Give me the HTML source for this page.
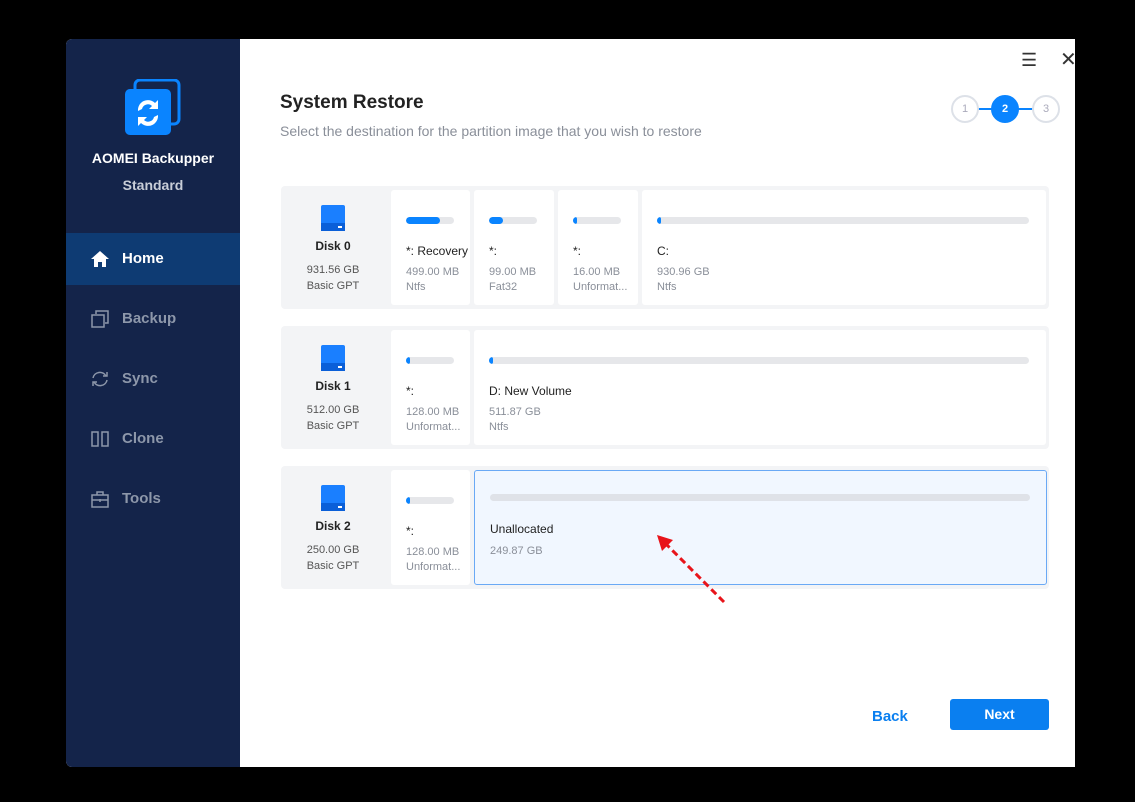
<!DOCTYPE html>
<html><head><style>
*{margin:0;padding:0;box-sizing:border-box}
body{width:1135px;height:802px;background:#000;position:relative;font-family:"Liberation Sans",sans-serif;overflow:hidden}
.win{position:absolute;left:66px;top:39px;width:1009px;height:728px;background:#fff;border-radius:6px 0 0 6px;overflow:hidden}
.side{position:absolute;left:0;top:0;width:174px;height:728px;background:#14244a}
.brand{position:absolute;top:111px;width:174px;text-align:center;color:#fff;font-weight:bold;font-size:14px}
.std{position:absolute;top:138px;width:174px;text-align:center;color:#c9ced8;font-weight:bold;font-size:14px}
.nav{position:absolute;left:0;width:174px;height:52px;color:#8d97aa;font-size:15px;font-weight:bold;line-height:52px;padding-left:56px}
.nav.act{background:#0e3b73;color:#fff}
.nav svg{position:absolute;left:24px;top:16px}
.title{position:absolute;left:214px;top:53px;font-size:19px;font-weight:bold;color:#222}
.sub{position:absolute;left:214px;top:84px;font-size:14px;color:#8a8f99}
.row{position:absolute;left:215px;width:768px;height:123px;background:#f3f4f6;border-radius:4px}
.disk{position:absolute;left:0;top:0;width:104px;height:123px;text-align:center}
.disk .n{position:absolute;top:53px;width:104px;font-size:12px;color:#222;font-weight:bold}
.disk .s{position:absolute;top:76px;width:104px;font-size:11px;color:#555;line-height:16px}
.card{position:absolute;top:4px;height:115px;background:#fff;border-radius:3px;padding-left:15px}
.bar{position:absolute;left:15px;top:27px;height:7px;border-radius:4px;background:#e6e7ea;overflow:hidden}
.bar i{display:block;height:7px;background:#0a84ff;border-radius:4px}
.lb{position:absolute;left:15px;top:54px;font-size:12px;color:#222}
.sz{position:absolute;left:15px;top:75px;font-size:11px;color:#8a8f99;line-height:15px;white-space:nowrap}
.step{position:absolute;top:56px;width:28px;height:28px;border-radius:50%;border:2px solid #dde1e8;background:#fff;color:#aab;font-size:11px;text-align:center;line-height:24px}
</style></head><body>
<div class="win">
<div class="side">
<svg style="position:absolute;left:58px;top:40px" width="58" height="56"><rect x="11" y="1" width="44" height="44" rx="5" fill="none" stroke="#0a84ff" stroke-width="3"/><rect x="1" y="10" width="46" height="46" rx="5" fill="#0a84ff"/><path d="M14 32a10 10 0 0 1 17-8l3-3v9h-9l3-3a6 6 0 0 0-10 3z M34 36a10 10 0 0 1-17 8l-3 3v-9h9l-3 3a6 6 0 0 0 10-3z" fill="#fff"/></svg>
<div class="brand">AOMEI Backupper</div>
<div class="std">Standard</div>
<div class="nav act" style="top:194px"><svg width="20" height="20"><path d="M1 10L10 2l9 8h-3v8h-4v-5H8v5H4v-8z" fill="#fff"/></svg>Home</div>
<div class="nav" style="top:254px"><svg width="20" height="20"><rect x="2" y="6" width="12" height="12" fill="none" stroke="#8d97aa" stroke-width="1.5"/><path d="M6 5V2h12v12h-3" fill="none" stroke="#8d97aa" stroke-width="1.5"/></svg>Backup</div>
<div class="nav" style="top:314px"><svg width="20" height="20"><path d="M3 9a7 7 0 0 1 13-2M17 11a7 7 0 0 1-13 2" fill="none" stroke="#8d97aa" stroke-width="1.5"/><path d="M13 7h4V3M7 13H3v4" fill="none" stroke="#8d97aa" stroke-width="1.5"/></svg>Sync</div>
<div class="nav" style="top:374px"><svg width="20" height="20"><rect x="2" y="3" width="6" height="14" fill="none" stroke="#8d97aa" stroke-width="1.5"/><rect x="12" y="3" width="6" height="14" fill="none" stroke="#8d97aa" stroke-width="1.5"/></svg>Clone</div>
<div class="nav" style="top:434px"><svg width="20" height="20"><rect x="2" y="6" width="16" height="12" fill="none" stroke="#8d97aa" stroke-width="1.5"/><path d="M7 6V3h6v3M2 11h16M10 10v3" fill="none" stroke="#8d97aa" stroke-width="1.5"/></svg>Tools</div>
</div>
<div style="position:absolute;left:955px;top:11px;font-size:18px;color:#333">☰</div>
<div style="position:absolute;left:994px;top:8px;font-size:20px;color:#333">✕</div>
<div style="position:absolute;left:910px;top:69px;width:60px;height:2px;background:#0a84ff"></div>
<div class="step" style="left:885px">1</div>
<div class="step" style="left:925px;background:#0a84ff;border-color:#0a84ff;color:#fff;font-weight:bold">2</div>
<div class="step" style="left:966px">3</div>
<div class="title">System Restore</div>
<div class="sub">Select the destination for the partition image that you wish to restore</div>

<div class="row" style="top:147px">
<div class="disk"><svg style="position:absolute;left:38px;top:18px" width="28" height="28"><rect x="2" y="1" width="24" height="26" rx="2" fill="#1a7fff"/><rect x="2" y="19" width="24" height="8" fill="#0a5fd8"/><rect x="19" y="22" width="4" height="2" fill="#fff"/></svg><div class="n">Disk 0</div><div class="s">931.56 GB<br>Basic GPT</div></div>
<div class="card" style="left:110px;width:79px"><div class="bar" style="width:48px"><i style="width:34px"></i></div><div class="lb">*: Recovery</div><div class="sz">499.00 MB<br>Ntfs</div></div>
<div class="card" style="left:193px;width:80px"><div class="bar" style="width:48px"><i style="width:14px"></i></div><div class="lb">*:</div><div class="sz">99.00 MB<br>Fat32</div></div>
<div class="card" style="left:277px;width:80px"><div class="bar" style="width:48px"><i style="width:4px"></i></div><div class="lb">*:</div><div class="sz">16.00 MB<br>Unformat...</div></div>
<div class="card" style="left:361px;width:404px"><div class="bar" style="width:372px"><i style="width:4px"></i></div><div class="lb">C:</div><div class="sz">930.96 GB<br>Ntfs</div></div>
</div>

<div class="row" style="top:287px">
<div class="disk"><svg style="position:absolute;left:38px;top:18px" width="28" height="28"><rect x="2" y="1" width="24" height="26" rx="2" fill="#1a7fff"/><rect x="2" y="19" width="24" height="8" fill="#0a5fd8"/><rect x="19" y="22" width="4" height="2" fill="#fff"/></svg><div class="n">Disk 1</div><div class="s">512.00 GB<br>Basic GPT</div></div>
<div class="card" style="left:110px;width:79px"><div class="bar" style="width:48px"><i style="width:4px"></i></div><div class="lb">*:</div><div class="sz">128.00 MB<br>Unformat...</div></div>
<div class="card" style="left:193px;width:572px"><div class="bar" style="width:540px"><i style="width:4px"></i></div><div class="lb">D: New Volume</div><div class="sz">511.87 GB<br>Ntfs</div></div>
</div>

<div class="row" style="top:427px">
<div class="disk"><svg style="position:absolute;left:38px;top:18px" width="28" height="28"><rect x="2" y="1" width="24" height="26" rx="2" fill="#1a7fff"/><rect x="2" y="19" width="24" height="8" fill="#0a5fd8"/><rect x="19" y="22" width="4" height="2" fill="#fff"/></svg><div class="n">Disk 2</div><div class="s">250.00 GB<br>Basic GPT</div></div>
<div class="card" style="left:110px;width:79px"><div class="bar" style="width:48px"><i style="width:4px"></i></div><div class="lb">*:</div><div class="sz">128.00 MB<br>Unformat...</div></div>
<div class="card" style="left:193px;width:573px;background:#f1f7ff;border:1.5px solid #6aa9f5;padding-left:14px"><div class="bar" style="width:540px;background:#dfe2e8;top:23px"></div><div class="lb" style="top:51px">Unallocated</div><div class="sz" style="top:73px">249.87 GB</div></div>
</div>

<svg style="position:absolute;left:585px;top:490px" width="80" height="80"><line x1="73" y1="73" x2="14" y2="14" stroke="#e8141a" stroke-width="3" stroke-dasharray="7,4"/><path d="M6 6L22 11L11 22Z" fill="#e8141a"/></svg>

<div style="position:absolute;left:806px;top:669px;font-size:15px;font-weight:bold;color:#0a7ff0">Back</div>
<div style="position:absolute;left:884px;top:660px;width:99px;height:31px;background:#0a7ff0;border-radius:3px;color:#fff;font-size:14px;font-weight:bold;text-align:center;line-height:31px">Next</div>
</div>
</body></html>
